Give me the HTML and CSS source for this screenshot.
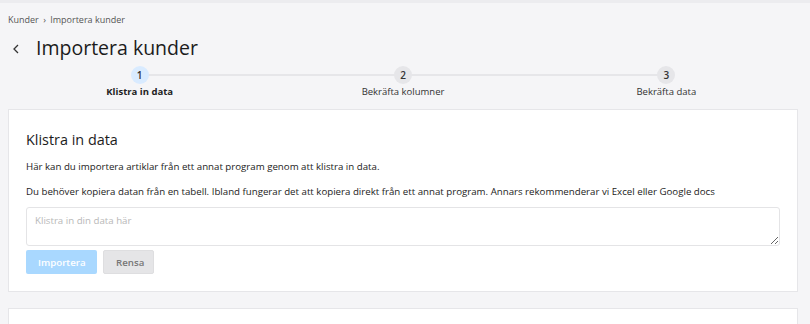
FILE: index.html
```html
<!DOCTYPE HTML>
<html>
    <head>
        <meta charset="UTF-8">
        <title>Importera kunder</title>
        <link rel="stylesheet" href="styles.css">
    </head>
    <body>
        <div class="topbar"></div>
        <div class="sida">
            <nav class="brodsmulor">
                <span>Kunder</span>
                <span class="pil">&rsaquo;</span>
                <span>Importera kunder</span>
            </nav>

            <header class="rubrik">
                <svg class="tillbaka" width="8" height="10" viewBox="0 0 8 10">
                    <path d="M6 1 L2 5 L6 9" fill="none" stroke="#333" stroke-width="1.3"/>
                </svg>
                <h1>Importera kunder</h1>
            </header>

            <div class="steg">
                <div class="linje"></div>
                <div class="steg-item aktiv">
                    <span class="cirkel">1</span>
                    <span class="etikett">Klistra in data</span>
                </div>
                <div class="steg-item">
                    <span class="cirkel">2</span>
                    <span class="etikett">Bekräfta kolumner</span>
                </div>
                <div class="steg-item">
                    <span class="cirkel">3</span>
                    <span class="etikett">Bekräfta data</span>
                </div>
            </div>

            <section class="kort">
                <h2>Klistra in data</h2>
                <p>Här kan du importera artiklar från ett annat program genom att klistra in data.</p>
                <p class="sista">Du behöver kopiera datan från en tabell. Ibland fungerar det att kopiera direkt från ett annat program. Annars rekommenderar vi Excel eller Google docs</p>
                <textarea placeholder="Klistra in din data här"></textarea>
                <div class="knappar">
                    <button class="importera" disabled>Importera</button>
                    <button class="rensa">Rensa</button>
                </div>
            </section>

            <section class="kort tom"></section>
        </div>
    </body>
</html>
```

FILE: styles.css
```css
body{
    margin: 0;
    background: #f5f5f7;
    font-family: "Open Sans", "Noto Sans", sans-serif;
    color: #222;
    overflow: hidden;
}
.topbar{
    height: 3px;
    background: #ececef;
}
.sida{
    padding: 0 12px 0 8px;
}
.brodsmulor{
    font-size: 9px;
    color: #555;
    padding-top: 10px;
    height: 14px;
    line-height: 14px;
}
.brodsmulor .pil{
    margin: 0 2px;
}
.rubrik{
    display: flex;
    align-items: center;
    height: 30px;
    margin-top: 5px;
}
.tillbaka{
    margin: 4px 16px 0 4px;
}
.rubrik h1{
    margin: 0;
    font-size: 19.5px;
    font-weight: 400;
    color: #1c1c1c;
}
.steg{
    position: relative;
    display: grid;
    grid-template-columns: 1fr 1fr 1fr;
    margin-top: 4px;
    height: 34px;
}
.linje{
    position: absolute;
    top: 8px;
    left: 16.66%;
    right: 16.66%;
    height: 2px;
    background: #e6e6e9;
}
.steg-item{
    position: relative;
    display: flex;
    flex-direction: column;
    align-items: center;
}
.cirkel{
    width: 18px;
    height: 18px;
    border-radius: 50%;
    background: #e6e6e9;
    font-size: 10px;
    font-weight: 600;
    line-height: 18px;
    text-align: center;
    color: #333;
}
.etikett{
    font-size: 9.5px;
    color: #333;
    margin-top: 1px;
}
.aktiv .cirkel{
    background: #d9ebff;
}
.aktiv .etikett{
    font-weight: 700;
    color: #222;
}
.kort{
    background: #fff;
    border: 1px solid #e6e6e9;
    padding: 20px 17px 17px;
    margin-top: 9px;
}
.kort h2{
    margin: 0 0 10px;
    font-size: 14.4px;
    font-weight: 400;
    color: #1c1c1c;
    line-height: 20px;
}
.kort p{
    margin: 0 0 11px;
    font-size: 9.7px;
    line-height: 14px;
    color: #222;
}
.kort p.sista{
    margin-bottom: 0;
}
.kort textarea{
    display: block;
    box-sizing: border-box;
    width: 100%;
    height: 39px;
    margin-top: 8px;
    border: 1px solid #e4e4e6;
    border-radius: 3px;
    padding: 6px 8px;
    font-family: inherit;
    font-size: 9.7px;
    background: #fff;
}
.kort textarea::placeholder{
    color: #b8b8b8;
}
.knappar{
    display: flex;
    gap: 6px;
    margin-top: 4px;
}
.knappar button{
    height: 24px;
    border: 0;
    border-radius: 2px;
    font-family: inherit;
    font-size: 9.7px;
    font-weight: 600;
    padding: 0 12px;
}
.importera{
    width: 71px;
    background: #a9d8ff;
    color: #fff;
}
.rensa{
    width: 51px;
    background: #e5e5e7;
    color: #777;
    border: 1px solid #dedee0 !important;
}
.kort.tom{
    margin-top: 16px;
    height: 40px;
    padding: 0;
}
```
